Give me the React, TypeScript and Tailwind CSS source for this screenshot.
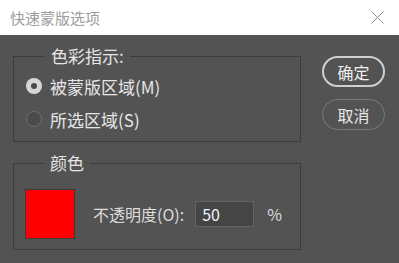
import React from 'react';

const font = { fontFamily: '"Noto Sans CJK SC", "Noto Sans", sans-serif' };

function Radio({ checked, label, mnemonic }: { checked?: boolean; label: string; mnemonic: string }) {
  return (
    <label className="flex items-center h-[22px] gap-[8px]">
      {checked ? (
        <span className="w-[16px] h-[16px] rounded-full bg-[#d6d6d6] flex items-center justify-center">
          <span className="w-[6px] h-[6px] rounded-full bg-[#4a4a4a]" />
        </span>
      ) : (
        <span className="w-[16px] h-[16px] rounded-full bg-[#4b4b4b] border border-[#6e6e6e]" />
      )}
      <span className="text-[17px] leading-none text-[#e6e6e6]">
        {label}({mnemonic})
      </span>
    </label>
  );
}

export default function App() {
  return (
    <div className="w-[399px] h-[263px] bg-[#535353] overflow-hidden select-none" style={font}>
      {/* ===== Title bar ===== */}
      <div className="h-[35px] bg-white flex items-center justify-between pl-[10px] pr-[14px]">
        <span className="text-[15px] text-[#9c9c9c] leading-none">快速蒙版选项</span>
        <svg width="13" height="13" viewBox="0 0 13 13" className="mr-[1px]">
          <path d="M0.5 0.5 L12.5 12.5 M12.5 0.5 L0.5 12.5" stroke="#8c8c8c" strokeWidth="1" fill="none" />
        </svg>
      </div>

      <div className="flex pl-[13px] pt-[11px]">
        {/* ===== Left column ===== */}
        <div className="w-[288px] flex flex-col gap-[11px]">
          <fieldset className="border border-[#3c3c3c] pl-[12px] h-[96px]">
            <legend className="ml-[19px] px-[6px] h-[20px] text-[17px] leading-[20px] text-[#e6e6e6]">色彩指示:</legend>
            <div className="flex flex-col gap-[11px] mt-[9px]">
              <Radio checked label="被蒙版区域" mnemonic="M" />
              <Radio label="所选区域" mnemonic="S" />
            </div>
          </fieldset>

          <fieldset className="border border-[#3c3c3c] pl-[11px] h-[97px]">
            <legend className="ml-[19px] px-[6px] h-[20px] text-[17px] leading-[20px] text-[#e6e6e6]">颜色</legend>
            <div className="flex items-center mt-[16px]">
              <div className="w-[50px] h-[50px] bg-[#ff0000] border border-[#3a3a3a]" />
              <span className="ml-[18px] text-[16px] leading-none text-[#dcdcdc]">不透明度(O):</span>
              <div className="ml-[11px] w-[59px] h-[26px] bg-[#454545] border border-[#646464] flex items-center pl-[6px] text-[16px] text-[#eef4ff] leading-none">
                50
              </div>
              <span className="ml-[13px] text-[16px] text-[#dcdcdc] leading-none">%</span>
            </div>
          </fieldset>
        </div>

        {/* ===== Buttons ===== */}
        <div className="ml-[21px] pt-[10px] flex flex-col gap-[12px]">
          <button className="w-[63px] h-[31px] rounded-full border-2 border-[#cfcfcf] text-[16px] text-[#f0f0f0] leading-none">
            确定
          </button>
          <button className="w-[63px] h-[31px] rounded-full border-[1.5px] border-[#7a7a7a] text-[16px] text-[#e8e8e8] leading-none">
            取消
          </button>
        </div>
      </div>
    </div>
  );
}
